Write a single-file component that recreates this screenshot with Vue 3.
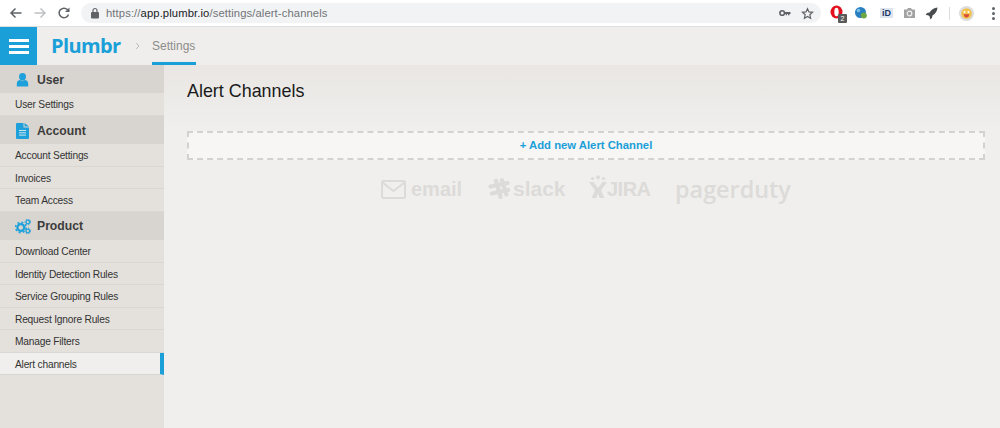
<script setup>
const sections = [
  { title: "User", icon: "user", items: ["User Settings"] },
  { title: "Account", icon: "doc", items: ["Account Settings", "Invoices", "Team Access"] },
  {
    title: "Product",
    icon: "gears",
    items: [
      "Download Center",
      "Identity Detection Rules",
      "Service Grouping Rules",
      "Request Ignore Rules",
      "Manage Filters",
      "Alert channels",
    ],
  },
];
</script>

<template>
  <div class="page">
    <div class="chrome">
      <div class="nav-icons">
        <svg width="14" height="14" viewBox="0 0 14 14" class="nav"><path d="M12.500 7H2M6.500 2.500 2 7l4.500 4.500" fill="none" stroke="#5f6368" stroke-width="1.500" /></svg>
        <svg width="14" height="14" viewBox="0 0 14 14" class="nav"><path d="M1.500 7H12M7.500 2.500 12 7l-4.500 4.500" fill="none" stroke="#bfc1c4" stroke-width="1.500" /></svg>
        <svg width="14" height="14" viewBox="0 0 14 14" class="nav"><path d="M11.500 8.500A4.800 4.800 0 1 1 10.400 3.600L12 5" fill="none" stroke="#5f6368" stroke-width="1.500" /><path d="M12.500 1.500V6H8z" fill="#5f6368" /></svg>
      </div>
      <div class="omnibox">
        <svg width="10" height="12" viewBox="0 0 10 12" class="lock"><rect x="1" y="5" width="8" height="6.500" rx="1" fill="#5f6368" /><path d="M3 5V3.500a2 2 0 0 1 4 0V5" fill="none" stroke="#5f6368" stroke-width="1.200" /></svg>
        <span class="url">https://<span class="host">app.plumbr.io</span>/settings/alert-channels</span>
        <svg width="12" height="8" viewBox="0 0 12 8" class="key"><circle cx="3.200" cy="4" r="2.300" fill="none" stroke="#5f6368" stroke-width="1.600" /><path d="M5.500 3h6v2h-1v1.200H9V5H8v1.200H6.800V5H5.500z" fill="#5f6368" /></svg>
        <svg width="13" height="13" viewBox="0 0 24 24" class="star"><path d="m12 3 2.700 6.100 6.600.7-5 4.400 1.400 6.500L12 17.400l-5.700 3.300 1.400-6.500-5-4.400 6.600-.7z" fill="none" stroke="#5f6368" stroke-width="2.200" /></svg>
      </div>
      <div class="extensions">
        <div class="ext-opera">
          <svg width="14" height="15" viewBox="0 0 14 15"><ellipse cx="6.500" cy="7" rx="6" ry="6.500" fill="#e2101e" /><ellipse cx="6.500" cy="7" rx="2.200" ry="4.300" fill="#fff" /></svg>
          <span class="badge">2</span>
        </div>
        <svg width="14" height="14" viewBox="0 0 14 14" class="ext-globe"><circle cx="6.500" cy="6.500" r="5.500" fill="#2a7fc1" /><circle cx="9.800" cy="9.500" r="3" fill="#6da744" /><circle cx="4.500" cy="4.500" r="1.800" fill="#7fc0e8" /></svg>
        <span class="ext-id">iD</span>
        <svg width="13" height="12" viewBox="0 0 13 12" class="ext-cam"><path d="M1 2.500h3L5 1h3l1 1.500h3V11H1z" fill="#a3a3a3" /><circle cx="6.500" cy="6.500" r="2.300" fill="none" stroke="#f2f2f2" stroke-width="1.200" /></svg>
        <svg width="13" height="13" viewBox="0 0 13 13" class="ext-rocket"><path d="M12.500.5C9 .8 6.500 2.300 4.500 5.500L2 6 .7 8l2.500.2 1.600 1.600L5 12.300l2-1.300.5-2.500c3.200-2 4.700-4.500 5-8z" fill="#4a4d50" /></svg>
        <span class="divider"></span>
        <span class="avatar">
          <svg width="11" height="11" viewBox="0 0 11 11"><circle cx="5.500" cy="5.500" r="5.300" fill="#f2c14e" /><circle cx="3.500" cy="4" r="1" fill="#fff" /><circle cx="7.500" cy="4" r="1" fill="#fff" /><path d="M2.800 6.300h5.400C8 8.500 6.800 9.600 5.500 9.600S3 8.500 2.800 6.300z" fill="#d84a3a" /></svg>
        </span>
        <span class="dots"><i></i><i></i><i></i></span>
      </div>
    </div>

    <header class="topbar">
      <div class="burger"><i></i><i></i><i></i></div>
      <div class="logo">Plumbr</div>
      <svg width="6" height="8" viewBox="0 0 6 8" class="crumb-arrow"><path d="m1 .8 3 3.200-3 3.200" fill="none" stroke="#bdbbb8" stroke-width="1" /></svg>
      <div class="tab">Settings</div>
    </header>

    <div class="body">
      <aside class="sidebar">
        <template v-for="section in sections" :key="section.title">
          <div class="section-head">
            <span class="section-icon">
              <svg v-if="section.icon === 'user'" width="13" height="14" viewBox="0 0 13 14">
                <ellipse cx="6.500" cy="3.800" rx="3.500" ry="3.700" fill="#1ea1da" />
                <path d="M.8 13.500V10.500C.8 8.500 2.500 7.300 4 7.100c1.500 1 3.500 1 5 0 1.500.2 3.200 1.400 3.200 3.400v3z" fill="#1ea1da" />
              </svg>
              <svg v-else-if="section.icon === 'doc'" width="13" height="16" viewBox="0 0 13 16">
                <path d="M0 1a1 1 0 0 1 1-1h6.500v4.500H13V15a1 1 0 0 1-1 1H1a1 1 0 0 1-1-1z" fill="#1ea1da" />
                <path d="M8.500 0 13 3.500H8.500z" fill="#1ea1da" />
                <path d="M3 7.500h7M3 9.800h7M3 12.100h7" stroke="#cfe6f1" stroke-width="1" />
              </svg>
              <svg v-else width="16" height="15" viewBox="0 0 16 15">
                <circle cx="5.800" cy="8.500" r="3.400" fill="none" stroke="#1ea1da" stroke-width="2.200" />
                <circle cx="5.800" cy="8.500" r="5.200" fill="none" stroke="#1ea1da" stroke-width="1.500" stroke-dasharray="2 2.080" />
                <circle cx="12.800" cy="3" r="1.800" fill="none" stroke="#1ea1da" stroke-width="1.300" />
                <circle cx="12.800" cy="3" r="2.900" fill="none" stroke="#1ea1da" stroke-width="1" stroke-dasharray="1.300 1.400" />
                <circle cx="12.800" cy="12" r="1.800" fill="none" stroke="#1ea1da" stroke-width="1.300" />
                <circle cx="12.800" cy="12" r="2.900" fill="none" stroke="#1ea1da" stroke-width="1" stroke-dasharray="1.300 1.400" />
              </svg>
            </span>
            <span>{{ section.title }}</span>
          </div>
          <div
            v-for="item in section.items"
            :key="item"
            class="side-item"
            :class="{ active: item === 'Alert channels' }"
          >
            {{ item }}
          </div>
        </template>
      </aside>

      <main class="content">
        <div class="content-head">
          <h1>Alert Channels</h1>
        </div>
        <div class="add-box">+ Add new Alert Channel</div>
        <div class="channels">
          <div class="channel email">
            <svg width="25" height="19" viewBox="0 0 25 19"><rect x="1" y="1" width="23" height="17" rx="1.500" fill="none" stroke="#dcdbd9" stroke-width="2" /><path d="m1.500 2.500 11 8.500 11-8.500" fill="none" stroke="#dcdbd9" stroke-width="2" /></svg>
            <span>email</span>
          </div>
          <div class="channel slack">
            <svg width="22" height="22" viewBox="0 0 22 22"><g stroke="#dcdbd9" stroke-width="4.200" stroke-linecap="round"><path d="M8.500 2.500 12 19M14.500 2.500 18 17" transform="rotate(-4 11 11)" /><path d="M2.500 8.500 19.500 5M4 15.500 20 12" /></g></svg>
            <span>slack</span>
          </div>
          <div class="channel jira">
            <svg width="18" height="24" viewBox="1 0 18 24"><g fill="#dcdbd9"><circle cx="10" cy="2.300" r="2" /><circle cx="4.500" cy="3.500" r="1.600" /><circle cx="15.500" cy="3.500" r="1.600" /><path d="M1 7h4.500L10 13l4.500-6H19l-6 8.500L16.500 23h-4.800L10 18.500 8.300 23H3.500L7 15.500z" /></g></svg>
            <span>JIRA</span>
          </div>
          <div class="channel pager">pagerduty</div>
        </div>
      </main>
    </div>
  </div>
</template>

<style>
html,
body {
  margin: 0;
  background: #f0efed;
}
</style>

<style scoped>
.page {
  width: 1000px;
  height: 428px;
  overflow: hidden;
  display: flex;
  flex-direction: column;
  font-family: "Liberation Sans", Arial, sans-serif;
  color: #333;
}

.chrome {
  height: 27px;
  flex: none;
  display: flex;
  align-items: center;
  background: #fff;
  border-bottom: 1px solid #dedede;
  box-sizing: border-box;
}

.nav-icons {
  display: flex;
  align-items: center;
  gap: 10px;
  padding-left: 9px;
  width: 81px;
  box-sizing: border-box;
}

.nav {
  display: block;
}

.omnibox {
  width: 740px;
  height: 20px;
  border-radius: 10px;
  background: #f1f3f4;
  display: flex;
  align-items: center;
  padding-left: 9px;
  padding-right: 7px;
  box-sizing: border-box;
  font-size: 11.25px;
  letter-spacing: 0.1px;
}

.lock {
  margin-right: 6px;
}

.url {
  flex: 1;
  color: #717478;
}

.host {
  color: #202124;
}

.key {
  margin-right: 10px;
}

.extensions {
  flex: 1;
  display: flex;
  align-items: center;
  padding-left: 9px;
}

.ext-opera {
  width: 16px;
  height: 16px;
  position: relative;
  margin-right: 8px;
}

.badge {
  position: absolute;
  left: 8px;
  top: 9px;
  width: 9px;
  height: 9px;
  background: #5a5a5a;
  color: #fff;
  font-size: 7px;
  line-height: 9px;
  text-align: center;
  border-radius: 1px;
}

.ext-globe {
  margin-right: 12px;
}

.ext-id {
  width: 13px;
  height: 10px;
  background: #dfe5ef;
  color: #1c3766;
  font-size: 9px;
  font-weight: 700;
  line-height: 10px;
  text-align: center;
  margin-right: 10px;
}

.ext-cam {
  margin-right: 9px;
}

.ext-rocket {
  margin-right: 11px;
}

.divider {
  width: 1px;
  height: 13px;
  background: #dadce0;
  margin-right: 9px;
}

.avatar {
  width: 15px;
  height: 15px;
  border-radius: 50%;
  background: #dcdcdc;
  display: flex;
  align-items: center;
  justify-content: center;
  margin-right: 18px;
}

.dots {
  display: flex;
  flex-direction: column;
  gap: 2px;
}

.dots i {
  display: block;
  width: 3px;
  height: 3px;
  border-radius: 50%;
  background: #5f6368;
}

.topbar {
  height: 38px;
  flex: none;
  display: flex;
  align-items: stretch;
  background: #f0eeec;
}

.burger {
  width: 37px;
  background: #1b9fd9;
  display: flex;
  flex-direction: column;
  justify-content: center;
  align-items: center;
  gap: 3px;
}

.burger i {
  display: block;
  width: 20px;
  height: 3px;
  background: #fff;
}

.logo {
  margin-left: 14px;
  width: 84px;
  font-size: 20px;
  font-weight: 700;
  letter-spacing: -0.6px;
  line-height: 38px;
  color: #1b9fd9;
  font-family: "Open Sans", "Liberation Sans", sans-serif;
}

.crumb-arrow {
  align-self: center;
  margin-right: 11px;
}

.tab {
  width: 44px;
  font-size: 12px;
  line-height: 38px;
  color: #8c8c8a;
  box-sizing: border-box;
  border-bottom: 3px solid #1b9fd9;
}

.body {
  flex: 1;
  display: flex;
  min-height: 0;
}

.sidebar {
  width: 164px;
  flex: none;
  background: #e4e1dc;
}

.section-head {
  height: 28.4px;
  box-sizing: border-box;
  padding-top: 1px;
  display: flex;
  align-items: center;
  background: #d8d4cf;
  font-size: 12.2px;
  font-weight: 700;
  color: #3c3c3c;
}

.section-icon {
  width: 37px;
  display: flex;
  justify-content: center;
  flex: none;
  padding-left: 8px;
  box-sizing: border-box;
}

.section-icon svg {
  display: block;
}

.side-item {
  height: 22.5px;
  box-sizing: border-box;
  padding-left: 15px;
  padding-top: 1px;
  font-size: 10.2px;
  letter-spacing: -0.2px;
  line-height: 21px;
  color: #333;
  border-bottom: 1px solid #dad6d1;
}

.side-item.active {
  background: #f0efed;
  border-right: 4px solid #1b9fd9;
}

.content {
  flex: 1;
  padding: 0 15px 0 23px;
  background: linear-gradient(#e9e6e3 0, #f0efed 65px);
}

.content-head {
  height: 65px;
}

h1 {
  margin: 0;
  padding-top: 15px;
  font-size: 17.9px;
  font-weight: 400;
  line-height: 22px;
  color: #1a1a1a;
}

.add-box {
  height: 29px;
  margin-top: 1px;
  box-sizing: border-box;
  border: 2px dashed #d4d2cf;
  background: #f7f6f4;
  text-align: center;
  font-size: 11.3px;
  font-weight: 700;
  line-height: 25px;
  color: #1b9fd9;
}

.channels {
  display: flex;
  align-items: center;
  height: 58px;
  padding-left: 194px;
  color: #dcdbd9;
  font-weight: 700;
}

.channel {
  display: flex;
  align-items: center;
}

.email {
  width: 107px;
  gap: 5px;
  font-size: 20px;
}

.slack {
  width: 101px;
  gap: 3px;
  font-size: 21px;
}

.jira {
  width: 86px;
  font-size: 20px;
  letter-spacing: -0.5px;
}

.jira svg {
  margin-top: -5px;
}

.pager {
  font-family: "Open Sans", "Liberation Sans", sans-serif;
  font-weight: 600;
  font-size: 23.4px;
}
</style>
